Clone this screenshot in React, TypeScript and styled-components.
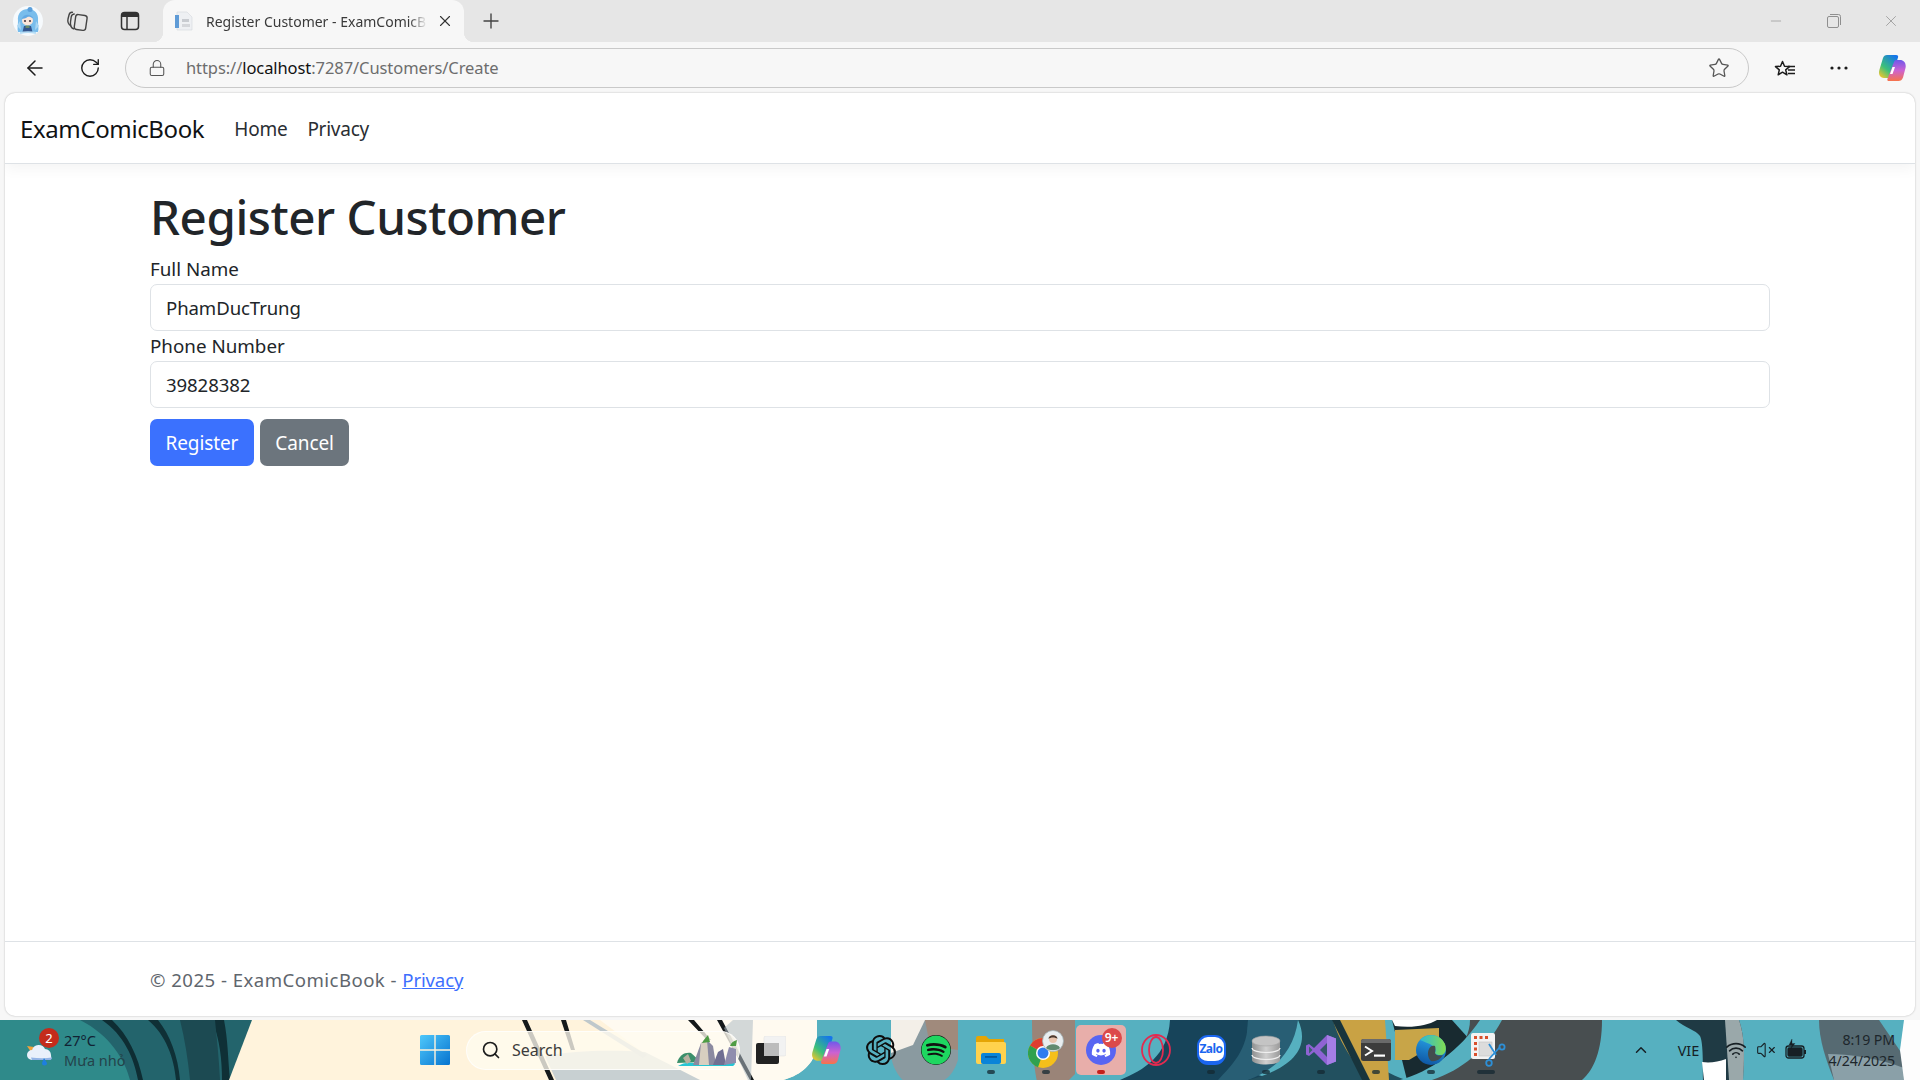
import React from "react";
import styled, { createGlobalStyle } from "styled-components";
import { ArrowLeft, RotateCw, Lock, Star, X, Plus, Minus, Search, ChevronUp, Wifi, VolumeX } from "lucide-react";
import { FaDiscord, FaSpotify } from "react-icons/fa";
import { SiOpenai } from "react-icons/si";

const FONT = `"Noto Sans", "Open Sans", "Liberation Sans", sans-serif`;

const Global = createGlobalStyle`
  html, body { margin: 0; padding: 0; width: 1920px; height: 1080px; overflow: hidden; background: #f7f7f7; }
  body { font-family: ${FONT}; color: #212529; }
  * { box-sizing: border-box; }
`;

const Screen = styled.div`
  width: 1920px;
  height: 1080px;
  display: flex;
  flex-direction: column;
  background: #f7f7f7;
`;

/* ---------- Browser chrome ---------- */
const TabStrip = styled.div`
  height: 42px;
  background: #e6e6e6;
  display: flex;
  align-items: center;
  flex: none;
`;
const StripIcon = styled.div<{ $w: number }>`
  width: ${(p) => p.$w}px;
  height: 42px;
  flex: none;
  display: flex;
  align-items: center;
  justify-content: center;
  color: #3f3f3f;
`;
const Tab = styled.div`
  position: relative;
  width: 301px;
  height: 42px;
  margin-left: 1px;
  flex: none;
  background: #f7f7f7;
  border-radius: 12px 12px 0 0;
  display: flex;
  align-items: center;
  padding: 0 10px 0 11px;
  &::before, &::after {
    content: "";
    position: absolute;
    bottom: 0;
    width: 10px;
    height: 10px;
  }
  &::before { left: -10px; background: radial-gradient(circle at 0 0, transparent 10px, #f7f7f7 10.500px); }
  &::after { right: -10px; background: radial-gradient(circle at 100% 0, transparent 10px, #f7f7f7 10.500px); }
`;
const TabTitle = styled.div`
  flex: 1;
  margin: 0 9px 0 12px;
  font-size: 14px;
  color: #3a3a3a;
  white-space: nowrap;
  overflow: hidden;
  -webkit-mask-image: linear-gradient(to right, #000 92%, transparent 100%);
  mask-image: linear-gradient(to right, #000 92%, transparent 100%);
`;
const NewTab = styled.div`
  width: 54px;
  display: flex;
  justify-content: center;
  color: #444;
`;
const WindowControls = styled.div`
  margin-left: auto;
  display: flex;
  color: #8f8f8f;
`;
const WindowButton = styled.div`
  width: 57.5px;
  height: 42px;
  display: flex;
  align-items: center;
  justify-content: center;
`;
const Toolbar = styled.div`
  height: 51px;
  flex: none;
  display: flex;
  align-items: center;
  padding: 0 0 0 10px;
  background: #f7f7f7;
`;
const ToolButton = styled.div<{ $w: number }>`
  width: ${(p) => p.$w}px;
  flex: none;
  display: flex;
  align-items: center;
  justify-content: center;
  color: #1c1c1c;
`;
const AddressBar = styled.div`
  width: 1624px;
  height: 40px;
  margin-left: 5px;
  flex: none;
  border: 1.5px solid #c9c9c9;
  border-radius: 20px;
  display: flex;
  align-items: center;
  padding: 0 18px 0 22px;
  color: #555;
`;
const Url = styled.div`
  margin-left: 20px;
  font-size: 16.5px;
  letter-spacing: -0.08px;
  color: #6d6d6d;
  flex: 1;
  b { font-weight: 400; color: #111; }
`;

/* ---------- Web page ---------- */
const PageCard = styled.div`
  height: 923px;
  margin: 0 5px 4px 5px;
  flex: none;
  background: #fff;
  border-radius: 10px;
  box-shadow: 0 0 2px rgba(0, 0, 0, 0.28);
  display: flex;
  flex-direction: column;
  overflow: hidden;
`;
const NavBar = styled.nav`
  height: 71px;
  flex: none;
  border-bottom: 1px solid #dee2e6;
  box-shadow: 0 4px 14px rgba(0, 0, 0, 0.05);
  display: flex;
  align-items: center;
  padding-left: 15px;
`;
const Brand = styled.a`
  font-size: 24px;
  letter-spacing: -0.38px;
  color: #101214;
  margin-right: 30px;
`;
const NavLink = styled.a`
  font-size: 19px;
  letter-spacing: -0.25px;
  color: #2a2e33;
  margin-right: 20px;
  padding-top: 1px;
`;
const Main = styled.main`
  flex: 1;
  padding: 15px 145px 0;
`;
const Title = styled.h1`
  margin: 0;
  font-size: 47.5px;
  line-height: 75px;
  font-weight: 550;
  letter-spacing: -0.45px;
  color: #212529;
`;
const Field = styled.div`
  margin-top: 0;
`;
const Label = styled.label`
  display: block;
  height: 30px;
  padding-top: 2px;
  font-size: 18.8px;
  line-height: 26px;
  letter-spacing: 0;
`;
const Input = styled.input`
  display: block;
  width: 1620px;
  height: 47px;
  border: 1.5px solid #dee2e6;
  border-radius: 7px;
  padding: 0 15px;
  font-family: ${FONT};
  font-size: 18.6px;
  letter-spacing: -0.1px;
  color: #212529;
  outline: none;
  background: #fff;
`;
const Buttons = styled.div`
  display: flex;
  gap: 6px;
  margin-top: 11px;
`;
const Button = styled.button<{ $bg: string }>`
  height: 47px;
  padding: 0 15.5px;
  border: none;
  border-radius: 7px;
  background: ${(p) => p.$bg};
  color: #fff;
  font-family: ${FONT};
  font-size: 19px;
  letter-spacing: -0.1px;
`;
const Footer = styled.footer`
  height: 75px;
  flex: none;
  border-top: 1.5px solid #dee2e6;
  padding: 25px 145px 0;
  font-size: 18.6px;
  line-height: 26px;
  letter-spacing: -0.15px;
  color: #5f666d;
  a { color: #3d6ffe; text-decoration: underline; }
`;
const FooterCopy = styled.span`
  letter-spacing: 0.46px;
`;

/* ---------- Taskbar ---------- */
const Taskbar = styled.div`
  position: relative;
  height: 60px;
  flex: none;
  display: flex;
  align-items: center;
  overflow: hidden;
  background: #56b0c0;
`;
const Wallpaper = styled.svg`
  position: absolute;
  inset: 0;
  width: 1920px;
  height: 60px;
`;
const Weather = styled.div`
  position: relative;
  width: 420px;
  height: 60px;
  flex: none;
  padding-left: 64px;
  display: flex;
  flex-direction: column;
  justify-content: center;
  font-size: 14.5px;
  line-height: 20px;
  color: #123;
`;
const WeatherIcon = styled.svg`
  position: absolute;
  left: 27px;
  top: 23px;
`;
const WeatherBadge = styled.span`
  position: absolute;
  left: 39px;
  top: 8px;
  width: 20px;
  height: 20px;
  border-radius: 50%;
  background: #c42b1c;
  color: #fff;
  font-size: 13px;
  line-height: 20px;
  text-align: center;
`;
const WeatherSub = styled.span`
  color: #24434a;
`;
const StartButton = styled.div`
  position: relative;
  width: 46px;
  flex: none;
`;
const SearchBox = styled.div`
  position: relative;
  width: 274px;
  height: 39px;
  margin-right: 3.5px;
  flex: none;
  border-radius: 20px;
  border: 1.5px solid rgba(255, 255, 255, 0.75);
  background: rgba(255, 251, 240, 0.78);
  display: flex;
  align-items: center;
  padding-left: 14px;
  font-size: 16px;
  color: #3c3c3c;
  svg.lens { color: #1c1c1c; margin-right: 11px; }
`;
const SearchArt = styled.svg`
  position: absolute;
  right: 0;
  top: 3px;
`;
const Cell = styled.div<{ $tile?: boolean }>`
  position: relative;
  width: 55px;
  height: 60px;
  flex: none;
  display: flex;
  align-items: center;
  justify-content: center;
  &::before {
    content: "";
    display: ${(p) => (p.$tile ? "block" : "none")};
    position: absolute;
    left: 2.5px;
    top: 5px;
    width: 50px;
    height: 50px;
    border-radius: 5px;
    background: #e8aeaa;
  }
  > * { position: relative; }
`;
const Running = styled.i<{ $c?: string; $w?: number }>`
  position: absolute !important;
  left: 50%;
  bottom: 6px;
  width: ${(p) => p.$w ?? 8}px;
  height: 4px;
  transform: translateX(-50%);
  border-radius: 2px;
  background: ${(p) => p.$c ?? "rgba(20,40,50,.75)"};
`;
const Badge = styled.span`
  position: absolute !important;
  left: 28px;
  top: 8px;
  width: 20px;
  height: 20px;
  border-radius: 50%;
  background: #dc4a4a;
  color: #fff;
  font-size: 12px;
  font-weight: 600;
  line-height: 19px;
  text-align: center;
`;
const ZaloIcon = styled.div`
  width: 29px;
  height: 30px;
  border-radius: 11px;
  background: #fff;
  border: 2px solid #1a66f0;
  border-bottom-width: 4px;
  color: #1a66f0;
  font-size: 12px;
  font-weight: 700;
  line-height: 23px;
  letter-spacing: -0.5px;
  text-align: center;
`;
const Tray = styled.div`
  margin-left: auto;
  padding-right: 25px;
  position: relative;
  display: flex;
  align-items: center;
  color: #172025;
`;
const TrayItem = styled.div<{ $w: number; $ml: number }>`
  width: ${(p) => p.$w}px;
  margin-left: ${(p) => p.$ml}px;
  display: flex;
  justify-content: center;
  font-size: 14.5px;
`;
const Clock = styled.div`
  width: 76px;
  margin-left: 12px;
  text-align: right;
  font-size: 14.2px;
  line-height: 21px;
  letter-spacing: -0.1px;
  white-space: nowrap;
  color: #1d262b;
`;

/* ---------- Drawn icons ---------- */
const Avatar = () => (
  <svg width="30" height="30" viewBox="0 0 30 30">
    <circle cx="15" cy="15" r="15" fill="#f6fafd" />
    <path d="M5 15C4 7 9 3 15 3s11 4 10 12c0 5 1 8 0 11H5c-1-3 0-6 0-11z" fill="#79bdec" />
    <path d="M4 20l3-5 1 9zM26 20l-3-5-1 9z" fill="#a8d6f4" />
    <circle cx="17" cy="3.500" r="2.500" fill="#5a9fdb" />
    <ellipse cx="14.500" cy="14.500" rx="5.500" ry="5" fill="#fbe6da" />
    <path d="M8.500 13c2-5 9-6 12-.5-3-1.500-4-2-6-1.500-2 1.500-4 1.500-6 2z" fill="#63a9e3" />
    <circle cx="12" cy="15" r="1.100" fill="#4a3b44" />
    <circle cx="17" cy="15" r="1.100" fill="#4a3b44" />
    <path d="M11 20h7l1.500 6h-10z" fill="#33568f" />
    <path d="M12.500 19.500h4v2.500h-4z" fill="#6b8b66" />
    <path d="M7 27c4-1 12-1 16 0" stroke="#b5dcf5" strokeWidth="2" fill="none" />
  </svg>
);
const CollectionsIcon = () => (
  <svg width="24" height="24" viewBox="0 0 24 24" fill="none" stroke="#444" strokeWidth="1.400">
    <rect x="10" y="6" width="11.500" height="15" rx="2.500" transform="rotate(8 16 13)" />
    <path d="M9 20C6 19 5 17 5.500 13l.7-5c.3-2 1.500-3 3.500-3" />
    <path d="M6 17C3 15 2.300 13 3 10l1-4c.5-2 2-3 4-2.600" />
  </svg>
);
const VerticalTabsIcon = () => (
  <svg width="20" height="20" viewBox="0 0 20 20" fill="none">
    <rect x="1.500" y="1.500" width="17" height="17" rx="3" stroke="#333" strokeWidth="1.500" />
    <path d="M1.500 4.500a3 3 0 0 1 3-3h11a3 3 0 0 1 3 3V6h-17z" fill="#333" />
    <path d="M7 6v12" stroke="#333" strokeWidth="1.500" />
  </svg>
);
const PageIcon = () => (
  <svg width="20" height="20" viewBox="0 0 20 20" style={{ flex: "none" }}>
    <path d="M3 1h10l5 5v13H3z" fill="#eef0f3" stroke="#d5d8dd" strokeWidth=".6" />
    <rect x="1" y="4" width="4" height="13" fill="#5f9bd6" />
    <rect x="8" y="8" width="7" height="3" fill="#c8cbd0" />
    <rect x="8" y="13" width="8" height="3" fill="#d4d6da" />
  </svg>
);
const RestoreIcon = () => (
  <svg width="14" height="14" viewBox="0 0 14 14" fill="none" stroke="#8f8f8f" strokeWidth="1">
    <rect x=".500" y="2.500" width="11" height="11" rx="1.500" />
    <path d="M3 .500h8.500a2 2 0 0 1 2 2V11" />
  </svg>
);
const FavoritesIcon = () => (
  <svg width="22" height="22" viewBox="0 0 22 22" fill="none" stroke="#1c1c1c" strokeWidth="1.500" strokeLinejoin="round">
    <path d="M8.500 2l2 4.700 5 .4-3.800 3.300 1.200 4.900-4.400-2.600-4.300 2.600 1.100-4.900L1.500 7.100l5-.4z" transform="translate(0 2.500)" />
    <path d="M14 9.500h7M14 13h7M14 16.500h7" />
  </svg>
);
const CopilotIcon = ({ size = 28 }: { size?: number }) => (
  <svg width={size} height={size} viewBox="0 0 28 28">
    <defs>
      <linearGradient id="cpA" x1="0.100" y1="1" x2="0.800" y2="0">
        <stop offset="0" stopColor="#f7c62a" />
        <stop offset=".4" stopColor="#3cc07a" />
        <stop offset="1" stopColor="#1474ec" />
      </linearGradient>
      <linearGradient id="cpB" x1="0.500" y1="0" x2="0.500" y2="1">
        <stop offset="0" stopColor="#6f58ea" />
        <stop offset=".5" stopColor="#cc62d2" />
        <stop offset="1" stopColor="#f7734a" />
      </linearGradient>
    </defs>
    <path d="M9 1h9c2 0 2.500 1 2 2.500L14 22c-.6 1.500-1.500 2-3 2H6C2 24 0 20 1.500 15.500L5 4c.7-2 2-3 4-3z" fill="url(#cpA)" />
    <path d="M18 6h4c4 0 6.500 3.500 5.500 8l-2.500 9.500c-.8 2.500-2.500 3.500-4.500 3.500H11c-1.500 0-2-1-1.500-2.200L16 8c.5-1.300 1-2 2-2z" fill="url(#cpB)" />
    <path d="M14.500 13h2.500l-2.500 7H12z" fill="#fff" />
  </svg>
);
const WindowsLogo = () => (
  <svg width="30" height="30" viewBox="0 0 30 30" style={{ display: "block" }}>
    <defs>
      <linearGradient id="win" x1="0" y1="0" x2="1" y2="1">
        <stop offset="0" stopColor="#4fc8fb" />
        <stop offset="1" stopColor="#0673cf" />
      </linearGradient>
    </defs>
    <path d="M0 1.500A1.500 1.500 0 0 1 1.500 0h12.800v14.300H0zM15.700 0h12.800A1.500 1.500 0 0 1 30 1.500v12.800H15.700zM0 15.700h14.300V30H1.500A1.500 1.500 0 0 1 0 28.500zM15.700 15.700H30v12.800a1.500 1.500 0 0 1-1.500 1.500H15.700z" fill="url(#win)" />
  </svg>
);
const TaskViewIcon = () => (
  <svg width="30" height="28" viewBox="0 0 30 28">
    <rect x="8" y="0" width="22" height="20" rx="2" fill="#f2f2f2" stroke="#e2e2e2" strokeWidth=".6" />
    <rect x="0" y="7" width="23" height="21" rx="2" fill="#222" />
    <rect x="8" y="7" width="15" height="13" fill="#bcbcbc" />
  </svg>
);
const FolderIcon = () => (
  <svg width="30" height="28" viewBox="0 0 30 28">
    <path d="M0 2a2 2 0 0 1 2-2h8l3 3h15v6H0z" fill="#e5a505" />
    <path d="M0 6h28a2 2 0 0 1 2 2v18a2 2 0 0 1-2 2H2a2 2 0 0 1-2-2z" fill="#ffd24d" />
    <rect x="5" y="17" width="20" height="11" rx="2" fill="#0a84d8" />
    <rect x="9" y="20" width="12" height="1.800" fill="#045a9e" />
  </svg>
);
const ChromeIcon = () => (
  <svg width="36" height="40" viewBox="0 0 36 40">
    <g transform="translate(0 6)">
      <circle cx="15" cy="17" r="15" fill="#f5bf1b" />
      <path d="M15 17L2 9.500A15 15 0 0 1 28 9.500H15z" fill="#e03d30" />
      <path d="M15 17L2 9.500A15 15 0 0 0 10 31.200z" fill="#2fa14f" />
      <circle cx="15" cy="17" r="7" fill="#fff" />
      <circle cx="15" cy="17" r="5.500" fill="#2f7cf0" />
    </g>
    <circle cx="25" cy="11" r="10.500" fill="#e9eef0" stroke="#9fb0b4" strokeWidth=".8" />
    <circle cx="25" cy="9" r="4" fill="#e8c4ad" />
    <path d="M20.500 9c0-5 9-5 9 0-2-2-7-2-9 0z" fill="#4a3a30" />
    <path d="M18 18c2-5 12-5 14 0-3 3-11 3-14 0z" fill="#5f8a70" />
  </svg>
);
const OperaIcon = () => (
  <svg width="30" height="32" viewBox="0 0 30 32" fill="none" stroke="#e22b50" strokeWidth="1.800">
    <ellipse cx="15" cy="16" rx="14" ry="15" />
    <ellipse cx="15" cy="16" rx="7" ry="13" />
  </svg>
);
const DatabaseIcon = () => (
  <svg width="30" height="30" viewBox="0 0 30 30">
    <defs>
      <linearGradient id="db" x1="0" x2="1">
        <stop offset="0" stopColor="#8f9090" />
        <stop offset=".5" stopColor="#d0d0d0" />
        <stop offset="1" stopColor="#9a9a9a" />
      </linearGradient>
    </defs>
    <path d="M1 6v19c0 2.500 6 4.500 14 4.500s14-2 14-4.500V6z" fill="url(#db)" />
    <ellipse cx="15" cy="6" rx="14" ry="5" fill="#c4c4c4" stroke="#a3a3a3" strokeWidth=".6" />
    <path d="M1 13c0 2.500 6 4.500 14 4.500S29 15.500 29 13M1 20c0 2.500 6 4.500 14 4.500S29 22.500 29 20" stroke="#f0f0f0" strokeWidth="1.200" fill="none" />
  </svg>
);
const VsIcon = () => (
  <svg width="30" height="30" viewBox="0 0 30 30">
    <path d="M21 0l9 3.500v23L21 30 8 17l-5 4-3-1.500v-9L3 9l5 4z" fill="#8f63d4" />
    <path d="M3 11.500v7L6.500 15z" fill="#3b6070" />
    <path d="M21 0l9 3.500v23L21 30z" fill="#a57ee6" />
    <path d="M21 8v14l-7-7z" fill="#35566a" />
  </svg>
);
const TerminalIcon = () => (
  <svg width="30" height="22" viewBox="0 0 30 22">
    <rect width="30" height="22" rx="2.500" fill="#3c3c3c" />
    <path d="M0 2.500A2.500 2.500 0 0 1 2.500 0h25A2.500 2.500 0 0 1 30 2.500V4H0z" fill="#6a6a6a" />
    <path d="M4 7.500l7 4.500-7 4.500" stroke="#fff" strokeWidth="2" fill="none" />
    <rect x="13" y="15.500" width="11" height="2.200" fill="#fff" />
  </svg>
);
const EdgeIcon = () => (
  <svg width="30" height="32" viewBox="0 0 30 32">
    <defs>
      <linearGradient id="edgeA" x1="0.200" y1="1" x2="0.500" y2="0">
        <stop offset="0" stopColor="#0d52a0" />
        <stop offset="1" stopColor="#2aa7ea" />
      </linearGradient>
      <linearGradient id="edgeB" x1="0" y1="0.500" x2="1" y2="0.500">
        <stop offset="0" stopColor="#2bb9d8" />
        <stop offset="1" stopColor="#82dc50" />
      </linearGradient>
    </defs>
    <circle cx="15" cy="16" r="15" fill="url(#edgeA)" />
    <path d="M4 6C10-1 24-1 29 10c2 6 0 11-5 11-4 0-5-1-5-2 1-2 1-5-2-7-4-3-9-4-13-6z" fill="url(#edgeB)" />
    <path d="M13 15c1-3 4-4 6-3 1 2 0 5 0 7 1 3 5 3 8 2-3 5-8 7-12 6-3-3-4-8-2-12z" fill="#434c4e" />
  </svg>
);
const SnipIcon = () => (
  <svg width="36" height="34" viewBox="0 0 36 34" style={{ marginLeft: 6 }}>
    <rect x="0" y="0" width="24" height="26" rx="2" fill="#f3f3f3" />
    <path d="M3 3h3v3H3zM8.500 3h3v3h-3zM14 3h3v3h-3zM3 9h3v3H3zM3 14.500h3v3H3zM3 20h3v3H3z" fill="#d8502c" />
    <rect x="8" y="9" width="13" height="14" fill="#dcdcdc" stroke="#c4c4c4" strokeWidth=".6" />
    <path d="M18 11l7 11M29 14l-11 12" stroke="#2d8fd6" strokeWidth="1.800" fill="none" />
    <circle cx="31" cy="14" r="2.600" fill="none" stroke="#2d8fd6" strokeWidth="1.800" />
    <circle cx="18" cy="30" r="2.800" fill="none" stroke="#2d8fd6" strokeWidth="1.800" />
  </svg>
);
const BatteryIcon = () => (
  <svg width="22" height="22" viewBox="0 0 22 22" fill="none" stroke="#172025" strokeWidth="1.300">
    <rect x="1" y="7" width="18" height="12" rx="2.500" />
    <rect x="3" y="9" width="14" height="8" rx="1" fill="#172025" />
    <path d="M20 11v4" strokeWidth="2" />
    <path d="M7 0L4 6h3L5.500 10 10 4.500H7z" fill="#172025" strokeWidth=".3" />
  </svg>
);
const CloudIcon = () => (
  <WeatherIcon width="30" height="26" viewBox="0 0 30 26">
    <path d="M0 3l7 1-3 5z" fill="#f2a33a" />
    <path d="M5 17a5 5 0 0 1 0-10 7 7 0 0 1 13-1 6 6 0 0 1 6 6 5 5 0 0 1-1 5z" fill="#e9f0fb" />
    <path d="M5 17h18c1 0 2-1 2-2.500-6 1-14 1-21 0z" fill="#93b4e6" />
    <path d="M17 15l3 5a2.500 2.500 0 1 1-5 0z" fill="#1e7fe0" />
  </WeatherIcon>
);
const LandscapeArt = () => (
  <SearchArt width="62" height="33" viewBox="0 0 62 33">
    <path d="M1 31c4-3 10-4 16-3l40-1c2 2 0 4-2 4H4z" fill="#27c6d4" />
    <path d="M0 28c2-8 8-11 14-10l10 9z" fill="#3b8f6a" />
    <path d="M16 30l8-22 6-3 6 6 3 19z" fill="#8b8aa0" />
    <path d="M24 8l6-3 2 25H22z" fill="#d8cfc0" />
    <path d="M36 30l5-13 5-3 3 16z" fill="#706f92" />
    <path d="M47 30l5-18 7 2v14z" fill="#8f8dae" />
    <path d="M25 8c1-3 4-5 6-8l2 7z M53 11c1-3 3-5 7-6l-1 6z" fill="#4f9c45" />
    <path d="M6 23l5-4 3 7-4 3z" fill="#b8b0a0" />
  </SearchArt>
);

const WallpaperArt = () => (
  <Wallpaper viewBox="0 0 1920 60" preserveAspectRatio="none">
    <rect width="1920" height="60" fill="#56b0c0" />
    {/* left */}
    <rect width="260" height="60" fill="#2f8a8a" />
    <path d="M80 0c30 15 45 40 50 60h110l12-60z" fill="#23646c" />
    <path d="M102 0c22 15 32 38 36 60h5C138 36 128 15 112 0z" fill="#0e2d33" />
    <path d="M148 0c18 15 26 38 28 60h4C178 36 170 15 158 0zM212 0c8 20 10 40 10 60h8c-2-20-2-40-6-60z" fill="#0f3036" />
    <path d="M180 0h35c2 20 4 40 5 60h-30c-2-20-5-40-10-60z" fill="#1c4a52" />
    {/* cream */}
    <path d="M252 0h565v28c-5 20-20 28-34 32H229z" fill="#fff3dc" />
    <path d="M600 0h217v28c-5 20-20 28-34 32H680z" fill="#fffaf0" />
    <path d="M545 36c30-6 70-6 100-4l55 28H556z" fill="#c8d0d2" />
    <path d="M522 0l27 60h5L527 0zM561 0l10 30h4L566 0z" fill="#15191b" />
    <path d="M583 0l60 38 4-3L590 0z" fill="#bfc8cb" />
    <path d="M688 0l19 20h4L694 0zM717 0l33 60h4L722 0z" fill="#14181a" />
    <path d="M724 8l24 52h3l2-60h-20z" fill="#aebcc4" opacity=".55" />
    {/* middle */}
    <path d="M891 0h67v40c-4 12-10 20-20 23h-32c-10-8-15-20-15-30z" fill="#8a9aa0" />
    <path d="M891 0h34l-12 25-22 8z" fill="#f3efe8" />
    <path d="M925 0h33v30l-28-4z" fill="#a08a7c" />
    <path d="M1032 0h43v54l-8 8h-30c-4-20-5-40-5-62z" fill="#9a8478" />
    <path d="M1170 0h78c0 25-3 40-10 50l40 10h-158c24-10 48-24 50-60z" fill="#17445a" />
    <path d="M1248 0h50c-4 30-22 50-50 60h-30c14-15 30-30 30-60z" fill="#285e74" />
    <path d="M1298 0h38c18 30 40 50 70 60h-158c40-10 64-30 50-60z" fill="#22505f" />
    <path d="M1333 0h52l4 60h-20c-14-15-30-38-36-60z" fill="#c9a244" />
    <path d="M1340 0l30 60h-8l-30-60z" fill="#18343c" />
    <path d="M1392 0h60l18 20-28 40h-35z" fill="#182a30" />
    <path d="M1395 10l44-2 0 14-30 18h-14z" fill="#c8a548" />
    <path d="M1392 0h45c-10 6-25 8-42 6z" fill="#fff" />
    <path d="M1470 0h132c0 30-8 50-20 60h-176c40-10 64-35 64-60z" fill="#484e50" />
    <path d="M1400 60c30-8 60-30 80-60h22c-16 30-40 50-70 60z" fill="#56b0c0" />
    {/* right */}
    <path d="M1676 0h63c5 15 6 30 4 60h-40c0-20 0-38-3-44-4-6-15-8-24-16z" fill="#1f3a44" />
    <path d="M1725 0h14c5 15 6 30 4 60h-14z" fill="#9aa8aa" />
    <path d="M1702 42c8 1 16 0 24-3v21h-22z" fill="#fff" />
    <path d="M1819 0h60l30 44-5 16h-70c-8-20-15-40-15-60z" fill="#566a72" />
    <path d="M1828 34c20 0 50 4 76 14v12h-70z" fill="#8aa0a8" />
    <path d="M1904 0h16v60h-16l-4-30z" fill="#fdfdfd" />
  </Wallpaper>
);

export default function App() {
  return (
    <Screen>
      <Global />
      <TabStrip>
        <StripIcon $w={56}><Avatar /></StripIcon>
        <StripIcon $w={42}><CollectionsIcon /></StripIcon>
        <StripIcon $w={64}><VerticalTabsIcon /></StripIcon>
        <Tab>
          <PageIcon />
          <TabTitle>Register Customer - ExamComicBook</TabTitle>
          <X size={18} strokeWidth={1.5} color="#333" />
        </Tab>
        <NewTab><Plus size={24} strokeWidth={1.4} /></NewTab>
        <WindowControls>
          <WindowButton><Minus size={16} strokeWidth={1} /></WindowButton>
          <WindowButton><RestoreIcon /></WindowButton>
          <WindowButton><X size={18} strokeWidth={1} /></WindowButton>
        </WindowControls>
      </TabStrip>
      <Toolbar>
        <ToolButton $w={50}><ArrowLeft size={24} strokeWidth={1.5} /></ToolButton>
        <ToolButton $w={60}><RotateCw size={22} strokeWidth={1.5} /></ToolButton>
        <AddressBar>
          <Lock size={18} strokeWidth={1.4} />
          <Url>https://<b>localhost</b>:7287/Customers/Create</Url>
          <Star size={22} strokeWidth={1.4} color="#555" />
        </AddressBar>
        <ToolButton $w={72}><FavoritesIcon /></ToolButton>
        <ToolButton $w={36}>
          <svg width="18" height="4" viewBox="0 0 18 4" fill="#1c1c1c"><circle cx="2" cy="2" r="1.600" /><circle cx="9" cy="2" r="1.600" /><circle cx="16" cy="2" r="1.600" /></svg>
        </ToolButton>
        <ToolButton $w={70}><CopilotIcon /></ToolButton>
      </Toolbar>
      <PageCard>
        <NavBar>
          <Brand>ExamComicBook</Brand>
          <NavLink>Home</NavLink>
          <NavLink>Privacy</NavLink>
        </NavBar>
        <Main>
          <Title>Register Customer</Title>
          <Field>
            <Label>Full Name</Label>
            <Input readOnly value="PhamDucTrung" />
          </Field>
          <Field>
            <Label>Phone Number</Label>
            <Input readOnly value="39828382" />
          </Field>
          <Buttons>
            <Button $bg="#3b71fe">Register</Button>
            <Button $bg="#6c757d">Cancel</Button>
          </Buttons>
        </Main>
        <Footer><FooterCopy>© 2025 - ExamComicBook - </FooterCopy><a>Privacy</a></Footer>
      </PageCard>
      <Taskbar>
        <WallpaperArt />
        <Weather>
          <CloudIcon />
          <WeatherBadge>2</WeatherBadge>
          <span>27°C</span>
          <WeatherSub>Mưa nhỏ</WeatherSub>
        </Weather>
        <StartButton><WindowsLogo /></StartButton>
        <SearchBox>
          <Search className="lens" size={20} strokeWidth={2} />
          Search
          <LandscapeArt />
        </SearchBox>
        <Cell><TaskViewIcon /></Cell>
        <Cell><CopilotIcon size={30} /></Cell>
        <Cell><SiOpenai size={30} color="#0d0d0d" /></Cell>
        <Cell><FaSpotify size={30} color="#1ed760" style={{ background: "#111", borderRadius: "50%" }} /></Cell>
        <Cell><FolderIcon /><Running /></Cell>
        <Cell><ChromeIcon /><Running /></Cell>
        <Cell $tile>
          <svg width="30" height="30" viewBox="0 0 30 30"><circle cx="15" cy="15" r="15" fill="#5865f2" /></svg>
          <FaDiscord size={20} color="#fff" style={{ position: "absolute", left: 17.5, top: 20 }} />
          <Badge>9+</Badge>
          <Running $c="#c4201c" />
        </Cell>
        <Cell><OperaIcon /></Cell>
        <Cell><ZaloIcon>Zalo</ZaloIcon><Running /></Cell>
        <Cell><DatabaseIcon /><Running /></Cell>
        <Cell><VsIcon /><Running /></Cell>
        <Cell><TerminalIcon /><Running /></Cell>
        <Cell><EdgeIcon /><Running /></Cell>
        <Cell><SnipIcon /><Running $w={18} /></Cell>
        <Tray>
          <TrayItem $w={18} $ml={0}><ChevronUp size={20} strokeWidth={2} /></TrayItem>
          <TrayItem $w={21} $ml={28}>VIE</TrayItem>
          <TrayItem $w={24} $ml={25}><Wifi size={22} strokeWidth={1.8} /></TrayItem>
          <TrayItem $w={22} $ml={7}><VolumeX size={20} strokeWidth={1.3} /></TrayItem>
          <TrayItem $w={22} $ml={8}><BatteryIcon /></TrayItem>
          <Clock>8:19 PM<br />4/24/2025</Clock>
        </Tray>
      </Taskbar>
    </Screen>
  );
}
